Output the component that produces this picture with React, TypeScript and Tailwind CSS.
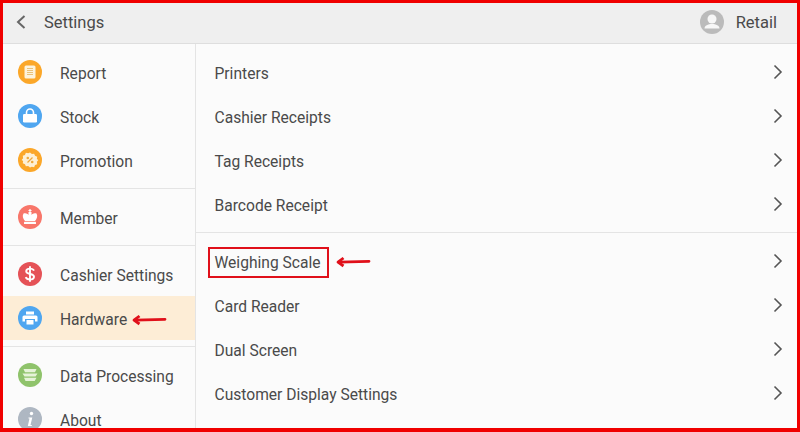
import React from "react";

const Circle = ({ bg, children }: { bg: string; children: React.ReactNode }) => (
  <svg width="24" height="24" viewBox="0 0 24 24" className="shrink-0">
    <circle cx="12" cy="12" r="12" fill={bg} />
    {children}
  </svg>
);

const icons: Record<string, React.ReactNode> = {
  Report: (
    <Circle bg="#fba729">
      <rect x="6.500" y="5.500" width="11" height="13" rx="1.500" fill="#fdf3dc" />
      <path d="M9 8.500h6M9 10.500h6M9 12.500h6M9 14.500h6" stroke="#e9c27a" strokeWidth="1" />
    </Circle>
  ),
  Stock: (
    <Circle bg="#4fa6f0">
      <rect x="5" y="10" width="14" height="8.500" rx="1.200" fill="#fff" />
      <path d="M8.500 11V8.500a3.500 3.500 0 0 1 7 0V11" fill="none" stroke="#fff" strokeWidth="1.600" />
    </Circle>
  ),
  Promotion: (
    <Circle bg="#fba729">
      <path d="M12 3.500l2.100 1.700 2.600-.4 1 2.500 2.500 1-.4 2.600L21.500 12l-1.700 2.100.4 2.600-2.500 1-1 2.500-2.600-.4L12 20.500l-2.100-1.700-2.600.4-1-2.500-2.500-1 .4-2.600L2.500 12l1.700-2.100-.4-2.600 2.500-1 1-2.500 2.600.4z" fill="#fdf0d5" transform="translate(12 12) scale(.88) translate(-12 -12)" />
      <path d="M9.500 14.500l5-5" stroke="#f0a93a" strokeWidth="1.200" />
      <circle cx="9.800" cy="10" r="1.300" fill="#f0a93a" />
      <circle cx="14.200" cy="14" r="1.300" fill="#f0a93a" />
    </Circle>
  ),
  Member: (
    <Circle bg="#f8766a">
      <path d="M5.500 8.500c2-.8 4 0 5 1.500V7h3v3c1-1.500 3-2.300 5-1.500 1.500 2.500.5 5-1.500 7.500H7C5 13.500 4 11 5.500 8.500z" fill="#fff" />
      <path d="M10.500 5.500h3M12 4v3.500" stroke="#fff" strokeWidth="1.200" />
      <rect x="6" y="16.800" width="12" height="2.200" rx=".6" fill="#fff" />
    </Circle>
  ),
  "Cashier Settings": (
    <Circle bg="#e55257">
      <path d="M16 8.600c-.6-1.300-2-2-4-2-2.300 0-3.800 1.100-3.800 2.700 0 3.700 7.800 1.700 7.800 5.400 0 1.700-1.600 2.700-4 2.700-2.200 0-3.700-.8-4.300-2.300M12 4.300v15.400" fill="none" stroke="#fff" strokeWidth="1.900" />
    </Circle>
  ),
  Hardware: (
    <Circle bg="#4fa6f0">
      <rect x="8" y="5.500" width="8" height="3" fill="#fff" />
      <path d="M6 9.500h12a1.500 1.500 0 0 1 1.500 1.500v4.500H17V13H7v2.500H4.500V11A1.500 1.500 0 0 1 6 9.500z" fill="#fff" />
      <rect x="8.500" y="14" width="7" height="4.500" fill="#fff" />
    </Circle>
  ),
  "Data Processing": (
    <Circle bg="#8fc36b">
      <path d="M5.500 6h13l-1.500 3.300h-10zM4.500 10.500h15l-2 3H6.500zM6 14.800h12.500l-1.800 3.200H7.500z" fill="#e6f3d8" />
    </Circle>
  ),
  About: (
    <Circle bg="#aeb7c2">
      <circle cx="13.500" cy="6.500" r="1.700" fill="#fff" />
      <path d="M10.500 10.500h3.800l-1.800 7.500h1.300v1h-4l1.700-7.500h-1z" fill="#fff" />
    </Circle>
  ),
};

const SideRow = ({ label, active }: { label: string; active?: boolean }) => (
  <div className={`flex h-[44px] items-center pl-[15px] ${active ? "bg-[#fdedd6]" : ""}`}>
    {icons[label]}
    <span className="ml-[18px] mt-[6px] whitespace-nowrap">{label}</span>
  </div>
);

const Chevron = () => (
  <svg width="10" height="16" viewBox="0 0 10 16" fill="none" stroke="#555" strokeWidth="1.600">
    <path d="M1.500 1.500L8 8l-6.500 6.500" />
  </svg>
);

const MainRow = ({ label }: { label: string }) => (
  <div className="flex h-[44px] items-center justify-between pl-[18.500px] pr-[14px]">
    <span className="mt-[6px]">{label}</span>
    <Chevron />
  </div>
);

const Arrow = ({ className }: { className: string }) => (
  <svg width="36" height="12" viewBox="0 0 36 12" className={className} fill="none" stroke="#e0101a" strokeWidth="2.800">
    <path d="M4 6.200L34 5.400" strokeLinecap="round" />
    <path d="M8.500 2L3 6.200L8.500 10" strokeLinejoin="round" />
  </svg>
);

export default function App() {
  const groups1 = [["Report", "Stock", "Promotion"], ["Member"], ["Cashier Settings", "Hardware"], ["Data Processing", "About"]];
  const groups2 = [["Printers", "Cashier Receipts", "Tag Receipts", "Barcode Receipt"], ["Weighing Scale", "Card Reader", "Dual Screen", "Customer Display Settings"]];
  return (
    <div
      className="relative flex h-[432px] w-[800px] flex-col overflow-hidden bg-[#fbfbfb] text-[15.600px] text-[#4a4a4a]"
      style={{ fontFamily: "Roboto, sans-serif" }}
    >
      <div className="flex h-[44px] shrink-0 items-center justify-between border-b border-[#dedede] bg-[#efefef] pl-[15px] pr-[23px] pt-[3px] text-[16.500px]">
        <div className="flex items-center">
          <svg width="12" height="16" viewBox="0 0 12 16" fill="none" stroke="#666" strokeWidth="2" className="mb-[2px]">
            <path d="M9.500 2L3 8l6.500 6" />
          </svg>
          <span className="ml-[17px]">Settings</span>
        </div>
        <div className="flex items-center">
          <svg width="24" height="24" viewBox="0 0 24 24" className="mb-[3px]">
            <circle cx="12" cy="12" r="12" fill="#bbbbbb" />
            <circle cx="12" cy="9" r="4.500" fill="#f7f7f7" />
            <path d="M4.500 18.500c0-3 3.500-4.500 7.500-4.500s7.500 1.500 7.500 4.500z" fill="#f7f7f7" />
          </svg>
          <span className="ml-[11.500px]">Retail</span>
        </div>
      </div>
      <div className="flex min-h-0 flex-1">
        <div className="w-[196px] shrink-0 border-r border-[#e4e4e4] pl-[3px]">
          {groups1.map((g, i) => (
            <div key={i} className={`py-[6px] ${i < 3 ? "border-b border-[#e4e4e4]" : ""}`}>
              {g.map((l) => (
                <SideRow key={l} label={l} active={l === "Hardware"} />
              ))}
            </div>
          ))}
        </div>
        <div className="flex-1 pr-[3px]">
          {groups2.map((g, i) => (
            <div key={i} className={`py-[6px] ${i === 0 ? "border-b border-[#e4e4e4]" : ""}`}>
              {g.map((l) => (
                <MainRow key={l} label={l} />
              ))}
            </div>
          ))}
        </div>
      </div>
      {/* annotation overlays */}
      <div className="pointer-events-none absolute left-[208px] top-[247px] h-[31px] w-[121px] border-2 border-[#e0101a]" />
      <Arrow className="absolute left-[335px] top-[256px]" />
      <Arrow className="absolute left-[131px] top-[314px]" />
      <div className="pointer-events-none absolute inset-0 border-x-[3px] border-b-[4px] border-t-[3px] border-[#f00000]" />
    </div>
  );
}
